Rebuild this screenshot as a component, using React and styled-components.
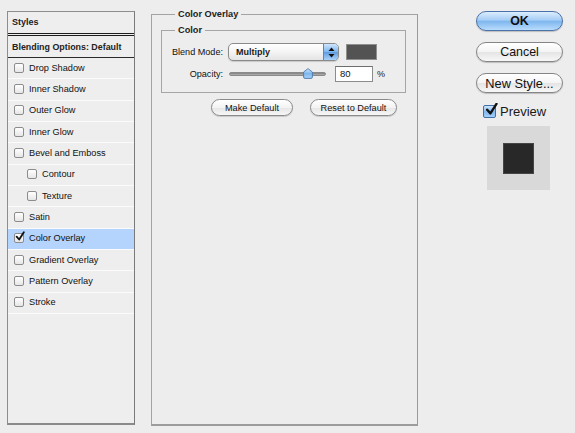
import React from 'react';
import styled, { createGlobalStyle } from 'styled-components';

const GlobalStyle = createGlobalStyle`
  html, body {
    margin: 0;
    padding: 0;
    background: #ededed;
  }
  body {
    font-family: "Liberation Sans", Arial, sans-serif;
    color: #111;
  }
`;

const effects = [
  { label: 'Drop Shadow' },
  { label: 'Inner Shadow' },
  { label: 'Outer Glow' },
  { label: 'Inner Glow' },
  { label: 'Bevel and Emboss' },
  { label: 'Contour', indent: true },
  { label: 'Texture', indent: true },
  { label: 'Satin' },
  { label: 'Color Overlay', checked: true, selected: true },
  { label: 'Gradient Overlay' },
  { label: 'Pattern Overlay' },
  { label: 'Stroke' },
];

const Check = ({ size = 10 }) => (
  <svg width={ size } height={ size } viewBox="0 0 12 12">
    <path d="M2 6.2 L5 9.6 L10.6 0.8" fill="none" stroke="#111" strokeWidth="2.2" strokeLinecap="round" strokeLinejoin="round" />
  </svg>
);

const App = () => {
  return (
    <Root>
      <GlobalStyle />
      <StylesPanel>
        <PanelHeader>Styles</PanelHeader>
        <BlendHeader>Blending Options: Default</BlendHeader>
        { effects.map((item) => (
          <EffectRow key={ item.label } selected={ item.selected } indent={ item.indent }>
            <SmallBox>{ item.checked && <Check size={ 11 } /> }</SmallBox>
            <span>{ item.label }</span>
          </EffectRow>
        )) }
      </StylesPanel>

      <MainGroup>
        <MainLegend>Color Overlay</MainLegend>
        <ColorGroup>
          <ColorLegend>Color</ColorLegend>
          <FormRow>
            <Label>Blend Mode:</Label>
            <Select>
              <SelectText>Multiply</SelectText>
              <Stepper>
                <svg width="7" height="11" viewBox="0 0 7 11">
                  <path d="M3.5 0.5 L6.5 4 L0.5 4 Z" fill="#111" />
                  <path d="M3.5 10.5 L6.5 7 L0.5 7 Z" fill="#111" />
                </svg>
              </Stepper>
            </Select>
            <Swatch />
          </FormRow>
          <FormRow second>
            <Label>Opacity:</Label>
            <Slider>
              <Track />
              <Thumb>
                <svg width="10" height="11" viewBox="0 0 10 11">
                  <defs>
                    <linearGradient id="thumbFill" x1="0" y1="0" x2="0" y2="1">
                      <stop offset="0" stopColor="#d6ecff" />
                      <stop offset="0.5" stopColor="#7fb6ec" />
                      <stop offset="1" stopColor="#a9d2fa" />
                    </linearGradient>
                  </defs>
                  <path d="M5 0.6 L9.4 4 L9.4 9 Q9.4 10.4 8 10.4 L2 10.4 Q0.6 10.4 0.6 9 L0.6 4 Z" fill="url(#thumbFill)" stroke="#4c78ab" strokeWidth="0.9" />
                </svg>
              </Thumb>
            </Slider>
            <NumberField>80</NumberField>
            <Unit>%</Unit>
          </FormRow>
        </ColorGroup>
        <DefaultRow>
          <PillButton width={ 82 }>Make Default</PillButton>
          <PillButton width={ 87 }>Reset to Default</PillButton>
        </DefaultRow>
      </MainGroup>

      <SideColumn>
        <DialogButton primary>OK</DialogButton>
        <DialogButton>Cancel</DialogButton>
        <DialogButton wide>New Style...</DialogButton>
        <PreviewToggle>
          <BlueBox><Check size={ 13 } /></BlueBox>
          <span>Preview</span>
        </PreviewToggle>
        <PreviewBox>
          <PreviewSquare />
        </PreviewBox>
      </SideColumn>
    </Root>
  );
};

export default App;

const Root = styled.div`
  width: 575px;
  height: 433px;
  display: flex;
  align-items: flex-start;
  padding-left: 7px;
  box-sizing: border-box;
  overflow: hidden;
`;

const StylesPanel = styled.div`
  margin-top: 11px;
  width: 128px;
  height: 414px;
  box-sizing: border-box;
  border: 1px solid #8d8d8d;
  border-right-color: #7a7a7a;
  border-bottom: 2px solid #8a8a8a;
  background: #eeeeee;
  display: flex;
  flex-direction: column;
`;

const PanelHeader = styled.div`
  height: 24px;
  box-sizing: border-box;
  border-bottom: 3px double #1c1c1c;
  padding: 0 0 1px 4px;
  display: flex;
  align-items: center;
  font-size: 9px;
  font-weight: 700;
  color: #222;
`;

const BlendHeader = styled.div`
  height: 22px;
  box-sizing: border-box;
  border-bottom: 1px solid #2a2a2a;
  padding-left: 4px;
  display: flex;
  align-items: center;
  font-size: 8.9px;
  font-weight: 700;
  color: #222;
`;

const EffectRow = styled.div`
  height: 21.35px;
  flex-shrink: 0;
  box-sizing: border-box;
  border-bottom: 1px solid #fbfbfb;
  padding: 0 0 1px ${ ({ indent }) => indent ? '19px' : '6px' };
  display: flex;
  align-items: center;
  gap: 5px;
  font-size: 9.2px;
  color: #111;
  background: ${ ({ selected }) => selected ? '#b4d4fd' : 'transparent' };
`;

const SmallBox = styled.span`
  width: 10px;
  height: 10px;
  box-sizing: border-box;
  border: 1px solid #8c8c8c;
  border-radius: 2px;
  background: linear-gradient(#ffffff, #e6e6e6);
  display: flex;
  align-items: center;
  justify-content: center;
  overflow: visible;

  svg {
    margin: -3px -2px 0 0;
  }
`;

const MainGroup = styled.fieldset`
  margin: 9px 0 0 16px;
  width: 267px;
  height: 417px;
  box-sizing: border-box;
  padding: 5px 0 0 9px;
  border: 1px solid #a3a3a3;
  border-right-color: #9a9a9a;
  border-bottom: 2px solid #9c9c9c;
  min-width: 0;
`;

const MainLegend = styled.legend`
  margin-left: 14px;
  padding: 0 3px;
  font-size: 9.2px;
  font-weight: 700;
  line-height: 11px;
  color: #222;
`;

const ColorGroup = styled.fieldset`
  margin: 0;
  width: 245px;
  box-sizing: border-box;
  padding: 7px 0 10px 0;
  border: 1px solid #a5a5a5;
  min-width: 0;
`;

const ColorLegend = styled.legend`
  margin-left: 13px;
  padding: 0 3px;
  font-size: 9.2px;
  font-weight: 700;
  line-height: 11px;
  color: #222;
`;

const FormRow = styled.div`
  display: flex;
  align-items: center;
  margin-top: ${ ({ second }) => second ? '5px' : '0' };
  height: ${ ({ second }) => second ? '16px' : '18px' };
`;

const Label = styled.span`
  width: 61px;
  text-align: right;
  font-size: 9.1px;
  color: #111;
  flex-shrink: 0;
`;

const Select = styled.div`
  margin-left: 5px;
  width: 111px;
  height: 18px;
  box-sizing: border-box;
  border: 1px solid #8a8a8a;
  border-radius: 5px;
  background: linear-gradient(#ffffff, #f4f4f4 50%, #e4e4e4);
  box-shadow: 0 1px 1px rgba(0, 0, 0, 0.15);
  display: flex;
  align-items: center;
  overflow: hidden;
`;

const SelectText = styled.span`
  flex: 1;
  padding-left: 7px;
  font-size: 9px;
  font-weight: 700;
  color: #1a1a1a;
`;

const Stepper = styled.span`
  width: 15px;
  height: 100%;
  box-sizing: border-box;
  border-left: 1px solid #5a86c0;
  background: linear-gradient(#cfe6fd, #7db5ef 50%, #5f9be0 51%, #a8d2fb);
  display: flex;
  align-items: center;
  justify-content: center;
`;

const Swatch = styled.span`
  margin-left: 7px;
  width: 31px;
  height: 16px;
  box-sizing: border-box;
  border: 1px solid #8f8f8f;
  background: #535353;
`;

const Slider = styled.div`
  margin-left: 6px;
  width: 97px;
  height: 12px;
  position: relative;
  display: flex;
  align-items: center;
`;

const Track = styled.div`
  width: 100%;
  height: 4px;
  border-radius: 2px;
  background: linear-gradient(#7d7d7d, #b4b4b4);
  border: 1px solid #8a8a8a;
  box-sizing: border-box;
`;

const Thumb = styled.span`
  position: absolute;
  left: 74px;
  top: 0;
  display: flex;
`;

const NumberField = styled.span`
  margin-left: 9px;
  width: 38px;
  height: 16px;
  box-sizing: border-box;
  border: 1px solid #8c8c8c;
  border-top-color: #6e6e6e;
  background: #fff;
  padding-left: 4px;
  font-size: 9.5px;
  line-height: 14px;
  color: #111;
`;

const Unit = styled.span`
  margin-left: 4px;
  font-size: 9px;
  color: #1a1a1a;
`;

const DefaultRow = styled.div`
  display: flex;
  gap: 17px;
  margin-top: 6px;
  padding-left: 50px;
`;

const PillButton = styled.button`
  width: ${ ({ width }) => width }px;
  height: 17px;
  padding: 0;
  box-sizing: border-box;
  border: 1px solid #8a8a8a;
  border-radius: 9px;
  background: linear-gradient(#ffffff, #f3f3f3 50%, #e6e6e6 51%, #f6f6f6);
  box-shadow: 0 1px 1px rgba(0, 0, 0, 0.15);
  font-family: "Liberation Sans", Arial, sans-serif;
  font-size: 9.2px;
  color: #111;
`;

const SideColumn = styled.div`
  margin: 11px 0 0 58px;
  width: 87px;
  display: flex;
  flex-direction: column;
  gap: 11px;
`;

const DialogButton = styled.button`
  width: 87px;
  height: 20px;
  padding: 0;
  box-sizing: border-box;
  border: 1px solid ${ ({ primary }) => primary ? '#4a73aa' : '#858585' };
  border-radius: 10px;
  background: ${ ({ primary }) => primary
    ? 'linear-gradient(#dcedfd, #a5cdf6 45%, #7fb6ef 52%, #b8dcfc)'
    : 'linear-gradient(#ffffff, #f4f4f4 50%, #e5e5e5 52%, #f7f7f7)' };
  box-shadow: 0 1px 1px rgba(0, 0, 0, 0.2);
  font-family: "Liberation Sans", Arial, sans-serif;
  font-size: ${ ({ wide }) => wide ? '12.8px' : '12.4px' };
  font-weight: ${ ({ primary }) => primary ? 700 : 400 };
  color: #111;
`;

const PreviewToggle = styled.div`
  margin-top: 0;
  padding-left: 7px;
  display: flex;
  align-items: center;
  gap: 4px;
  font-size: 13px;
  color: #1a1a1a;
`;

const BlueBox = styled.span`
  width: 13px;
  height: 13px;
  box-sizing: border-box;
  border: 1px solid #3f6ea8;
  border-radius: 2px;
  background: linear-gradient(#cde5fd, #80b7ef 55%, #a6d0fa);
  display: flex;
  align-items: center;
  justify-content: center;

  svg {
    margin: -4px -3px 0 0;
  }
`;

const PreviewBox = styled.div`
  margin: -4px 0 0 11px;
  width: 63px;
  height: 64px;
  background: #d9d9d9;
  display: flex;
  align-items: center;
  justify-content: center;
`;

const PreviewSquare = styled.div`
  width: 31px;
  height: 31px;
  box-sizing: border-box;
  border: 1px solid #444;
  background: #282828;
`;
